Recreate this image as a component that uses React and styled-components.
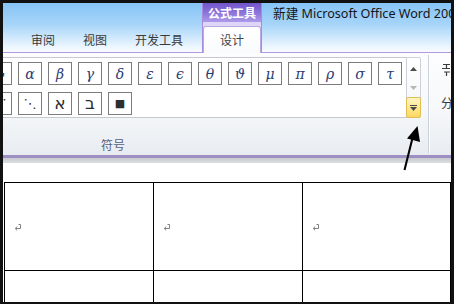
import React from 'react';
import styled, { createGlobalStyle } from 'styled-components';

const GlobalStyle = createGlobalStyle`
  html, body {
    margin: 0;
    padding: 0;
    background: #ffffff;
  }
  body {
    font-family: "Noto Sans CJK SC", "Noto Sans", sans-serif;
  }
`;

const Frame = styled.div`
  position: relative;
  width: 454px;
  height: 304px;
  box-sizing: border-box;
  border-style: solid;
  border-color: #111111;
  border-width: 3px 3px 2px 3px;
  overflow: hidden;
  display: flex;
  flex-direction: column;
  background: #ffffff;
`;

const TabStrip = styled.div`
  flex: 0 0 50px;
  box-sizing: border-box;
  display: flex;
  align-items: flex-end;
  border-bottom: 1px solid #b298de;
  background: linear-gradient(180deg, #86c4f6 0%, #a8d5f9 45%, #e6f3fe 85%, #f8fcff 100%);
`;

const Tab = styled.div`
  flex-shrink: 0;
  height: 24px;
  line-height: 24px;
  padding: 0 14px;
  margin-left: ${p => p.$offset || 0}px;
  font-size: 12px;
  color: #3a3a3a;
  white-space: nowrap;
`;

const ContextGroup = styled.div`
  flex-shrink: 0;
  align-self: stretch;
  width: 60px;
  box-sizing: border-box;
  margin-left: 5px;
  border-left: 1px solid #a68cdc;
  border-right: 1px solid #a68cdc;
  display: flex;
  flex-direction: column;
`;

const ContextHeader = styled.div`
  height: 19px;
  line-height: 19px;
  text-align: center;
  font-size: 12px;
  font-weight: bold;
  color: #ffffff;
  background: linear-gradient(180deg, #7254cb 0%, #8f76db 55%, #ad9aea 100%);
`;

const ContextBody = styled.div`
  flex: 1;
  display: flex;
  align-items: flex-end;
  background: linear-gradient(180deg, #ddd3f7 0%, #efeafc 60%, #fbfaff 100%);
`;

const DesignTab = styled.div`
  position: relative;
  z-index: 1;
  flex: 1;
  height: 27px;
  box-sizing: border-box;
  margin-bottom: -1px;
  border: 1px solid #baa8e0;
  border-bottom: none;
  border-radius: 3px 3px 0 0;
  background: linear-gradient(180deg, #ffffff 0%, #fafbfd 100%);
  text-align: center;
  line-height: 26px;
  font-size: 12px;
  color: #444444;
`;

const Title = styled.div`
  flex-shrink: 0;
  align-self: flex-start;
  margin: 2px 0 0 11px;
  font-family: "Noto Sans", "Noto Sans CJK SC", sans-serif;
  font-size: 12.6px;
  line-height: 18px;
  color: #151515;
  white-space: nowrap;
`;

const Ribbon = styled.div`
  flex: 0 0 105px;
  box-sizing: border-box;
  display: flex;
  padding-top: 4px;
  border-bottom: 3px solid #9d8fc2;
  background: linear-gradient(180deg, #fdfdfe 0%, #f6f8fa 55%, #e8ecf1 100%);
`;

const SymbolGroup = styled.div`
  flex: 0 0 616px;
  margin-left: -198px;
  display: flex;
  flex-direction: column;
`;

const GalleryRow = styled.div`
  height: 61px;
  display: flex;
`;

const Gallery = styled.div`
  flex: 1;
  box-sizing: border-box;
  display: flex;
  justify-content: flex-end;
  padding: 4px 4px 0 0;
  border-top: 1px solid #c6cad0;
  border-bottom: 1px solid #c6cad0;
  background: #ffffff;
`;

const SymbolGrid = styled.div`
  display: grid;
  grid-template-columns: repeat(14, 24px);
  grid-auto-rows: 23px;
  gap: 7px 6px;
  align-content: start;
`;

const SymbolBox = styled.div`
  box-sizing: border-box;
  border: 1px solid #7c7c7c;
  display: flex;
  align-items: center;
  justify-content: center;
  font-family: ${p => (p.$plain ? '"DejaVu Sans", sans-serif' : '"DejaVu Serif", serif')};
  font-style: ${p => (p.$plain ? 'normal' : 'italic')};
  font-size: ${p => p.$size || 14}px;
  color: ${p => (p.$plain ? '#2e2e2e' : '#2b3c74')};
  line-height: 1;
`;

const ScrollColumn = styled.div`
  flex: 0 0 15px;
  box-sizing: border-box;
  display: flex;
  flex-direction: column;
  border: 1px solid #cdd1d7;
  border-radius: 0 2px 2px 0;
  background: linear-gradient(180deg, #ffffff 0%, #f2f4f7 100%);
`;

const ScrollButton = styled.div`
  flex: 0 0 ${p => p.$h}px;
  display: flex;
  align-items: center;
  justify-content: center;
`;

const MoreButton = styled.div`
  flex: 1;
  margin: 0 -1px -1px -1px;
  border: 1px solid #e2bd55;
  border-radius: 2px;
  background: linear-gradient(180deg, #fff5c4 0%, #fde88f 50%, #fbd860 100%);
  display: flex;
  align-items: center;
  justify-content: center;
`;

const GroupLabel = styled.div`
  margin-top: auto;
  padding-bottom: 2px;
  text-align: center;
  font-size: 12px;
  line-height: 16px;
  color: #56607a;
`;

const Separator = styled.div`
  flex: 0 0 auto;
  width: 0;
  margin: -2px 0 2px 7px;
  border-left: 1px solid #cbd1d9;
  border-right: 1px solid #ffffff;
`;

const SideGroup = styled.div`
  flex-shrink: 0;
  margin-left: 11px;
  display: flex;
  flex-direction: column;
  align-items: flex-start;
`;

const SideLabel = styled.div`
  margin-top: 18px;
  font-size: 12px;
  line-height: 14px;
  color: #3a3a3a;
  white-space: nowrap;
`;

const PageGap = styled.div`
  flex: 0 0 5px;
  background: linear-gradient(180deg, #c6c9ce 0%, #dcdee2 100%);
`;

const Document = styled.div`
  flex: 1;
  padding: 19px 0 0 1px;
  background: #ffffff;
`;

const Table = styled.div`
  display: grid;
  grid-template-columns: 149px 149px 148px;
  grid-template-rows: 88px 88px;
  width: max-content;
  border-left: 1px solid #000000;
  border-top: 1px solid #000000;
`;

const Cell = styled.div`
  box-sizing: border-box;
  border-right: 1px solid #000000;
  border-bottom: 1px solid #000000;
  display: flex;
  align-items: center;
  padding-left: 9px;
`;

const Overlay = styled.svg`
  position: absolute;
  top: -3px;
  left: -3px;
  pointer-events: none;
`;

const ReturnMark = () => (
  <svg width="8" height="8" viewBox="0 0 8 8">
    <path d="M4.5 1.5 H6.5 V5.5 H1.5" fill="none" stroke="#808080" strokeWidth="1" />
    <path d="M3.2 3.6 L1.2 5.5 L3.2 7.4" fill="none" stroke="#808080" strokeWidth="1" />
  </svg>
);

const row1 = ['¬', 'α', 'β', 'γ', 'δ', 'ε', 'ϵ', 'θ', 'ϑ', 'μ', 'π', 'ρ', 'σ', 'τ'];
const row2 = [
  { s: '⋰', size: 13 },
  { s: '⋱', size: 13 },
  { s: 'א', size: 17 },
  { s: 'ב', size: 17 },
  { s: '■', size: 11 },
];

export default function App() {
  return (
    <>
      <GlobalStyle />
      <Frame>
        <TabStrip>
          <Tab $offset={-38}>邮件</Tab>
          <Tab>审阅</Tab>
          <Tab>视图</Tab>
          <Tab>开发工具</Tab>
          <ContextGroup>
            <ContextHeader>公式工具</ContextHeader>
            <ContextBody>
              <DesignTab>设计</DesignTab>
            </ContextBody>
          </ContextGroup>
          <Title>新建 Microsoft Office Word 2007 文档.docx - Microsoft Word</Title>
        </TabStrip>

        <Ribbon>
          <SymbolGroup>
            <GalleryRow>
              <Gallery>
                <SymbolGrid>
                  {row1.map((s, i) => (
                    <SymbolBox key={'a' + i} $plain={i === 0} $size={i === 0 ? 13 : 14}>{s}</SymbolBox>
                  ))}
                  {row2.map((item, i) => (
                    <SymbolBox key={'b' + i} $plain $size={item.size}>{item.s}</SymbolBox>
                  ))}
                </SymbolGrid>
              </Gallery>
              <ScrollColumn>
                <ScrollButton $h={21}>
                  <svg width="7" height="4" viewBox="0 0 7 4">
                    <path d="M0 4 L3.5 0 L7 4 Z" fill="#4a4a4a" />
                  </svg>
                </ScrollButton>
                <ScrollButton $h={18}>
                  <svg width="7" height="4" viewBox="0 0 7 4">
                    <path d="M0 0 L3.5 4 L7 0 Z" fill="#b5b5b5" />
                  </svg>
                </ScrollButton>
                <MoreButton>
                  <svg width="7" height="6" viewBox="0 0 7 6">
                    <rect x="0" y="0" width="7" height="1" fill="#4a4a4a" />
                    <path d="M0 2 L7 2 L3.5 6 Z" fill="#4a4a4a" />
                  </svg>
                </MoreButton>
              </ScrollColumn>
            </GalleryRow>
            <GroupLabel>符号</GroupLabel>
          </SymbolGroup>
          <Separator />
          <SideGroup>
            <svg width="10" height="16" viewBox="0 0 10 16" style={{ marginTop: 5 }}>
              <path d="M2 2.5 H9 M5.5 2.5 V6 M1 6.5 H9 M3 10 H9 M5.5 10 V14" stroke="#3c3c3c" strokeWidth="1.2" fill="none" />
            </svg>
            <SideLabel>分式</SideLabel>
          </SideGroup>
        </Ribbon>

        <PageGap />

        <Document>
          <Table>
            <Cell><ReturnMark /></Cell>
            <Cell><ReturnMark /></Cell>
            <Cell><ReturnMark /></Cell>
            <Cell />
            <Cell />
            <Cell />
          </Table>
        </Document>

        <Overlay width="454" height="304" viewBox="0 0 454 304">
          <line x1="404.5" y1="170" x2="413" y2="136" stroke="#000000" strokeWidth="2" />
          <path d="M417.5 126 L407 138.5 L420 142 Z" fill="#000000" />
        </Overlay>
      </Frame>
    </>
  );
}
